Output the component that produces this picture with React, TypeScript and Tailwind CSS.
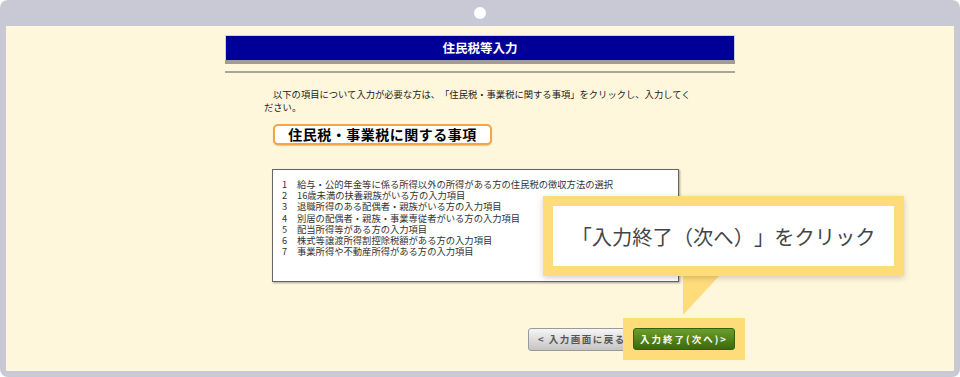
const items = [
  "給与・公的年金等に係る所得以外の所得がある方の住民税の徴収方法の選択",
  "16歳未満の扶養親族がいる方の入力項目",
  "退職所得のある配偶者・親族がいる方の入力項目",
  "別居の配偶者・親族・事業専従者がいる方の入力項目",
  "配当所得等がある方の入力項目",
  "株式等譲渡所得割控除税額がある方の入力項目",
  "事業所得や不動産所得がある方の入力項目",
];

const jp = "font-['Noto_Sans_CJK_JP','Noto_Sans',sans-serif]";

export default function App() {
  return (
    <div className={`h-[377px] w-[960px] bg-white [text-spacing-trim:space-all] ${jp}`}>
      <div className="flex h-full w-full flex-col rounded-[8px] bg-[#c9c9d6]">
        {/* top bar with camera dot */}
        <div className="flex h-[26px] shrink-0 items-center justify-center">
          <div className="h-[12px] w-[12px] rounded-full bg-white" />
        </div>

        <div className="mx-[6px] h-[345px] bg-[#fff7db]">
          <div className="relative mx-auto w-[510px] pt-[9px]">
            {/* header */}
            <div className="flex h-[25px] items-center justify-center border border-b-0 border-[#cfcfe0] bg-[#000099] text-[12.5px] font-bold text-white">
              住民税等入力
            </div>
            <div className="h-[4px] bg-[#a29d94]" />
            <div className="mt-[7px] h-[2px] bg-[#aaa59b]" />

            {/* description */}
            <p className="ml-[39px] mt-[15px] whitespace-nowrap text-[9.3px] leading-[13px] text-[#222]">
              <span className="ml-[9px]">
                以下の項目について入力が必要な方は、「住民税・事業税に関する事項」をクリックし、入力してく
              </span>
              <br />
              ださい。
            </p>

            {/* section button */}
            <div className="ml-[48px] mt-[10px] flex h-[21px] w-[219px] items-center justify-center rounded-[5px] border-2 border-[#f2a648] bg-white text-[14px] font-bold tracking-[0.5px] text-black shadow-[0_1px_1px_rgba(200,120,20,0.4)]">
              住民税・事業税に関する事項
            </div>

            {/* item list */}
            <div className="ml-[47px] mt-[24px] h-[113px] w-[407px] border border-[#666] bg-white pl-[9px] pt-[9px] shadow-[1px_1px_2px_rgba(0,0,0,0.35)]">
              {items.map((t, i) => (
                <div key={i} className="flex text-[9.3px] leading-[11.2px] text-[#333]">
                  <span className="w-[15px] shrink-0">{i + 1}</span>
                  <span className="whitespace-nowrap">{t}</span>
                </div>
              ))}
            </div>

            {/* buttons */}
            <div className="-mr-[10px] mt-[36px] flex items-center justify-end">
              <div className="flex h-[23px] w-[100px] items-center whitespace-nowrap rounded-[3px] border border-[#9a9a9a] bg-gradient-to-b from-[#f6f6f6] to-[#c4c4c4] pl-[9px] text-[9.5px] font-bold tracking-[1.5px] text-[#555]">
                &lt; 入力画面に戻る
              </div>
              <div className="relative -ml-[5px] bg-[#ffdc7a] p-[10px]">
                <div className="flex h-[22px] w-[102px] items-center justify-center whitespace-nowrap rounded-[3px] border border-[#33600a] bg-gradient-to-b from-[#6c9e2a] to-[#3b6a0a] text-[9.5px] font-bold tracking-[2px] text-white">
                  入力終了(次へ)&gt;
                </div>
              </div>
            </div>

            {/* callout tail */}
            <svg
              className="absolute left-[458px] top-[249px]"
              width="38"
              height="41"
              viewBox="0 0 38 41"
            >
              <polygon points="0,0 37,0 0,40" fill="#ffdc7a" />
            </svg>

            {/* callout */}
            <div className="absolute left-[318px] top-[170px] h-[80px] w-[361px] border-[10px] border-[#ffdc7a] bg-white shadow-[0_2px_6px_rgba(0,0,0,0.18)]">
              <div className="flex h-full items-center justify-center whitespace-nowrap text-[20.3px] text-[#444]">
                「入力終了（次へ）」をクリック
              </div>
            </div>
          </div>
        </div>
      </div>
    </div>
  );
}
